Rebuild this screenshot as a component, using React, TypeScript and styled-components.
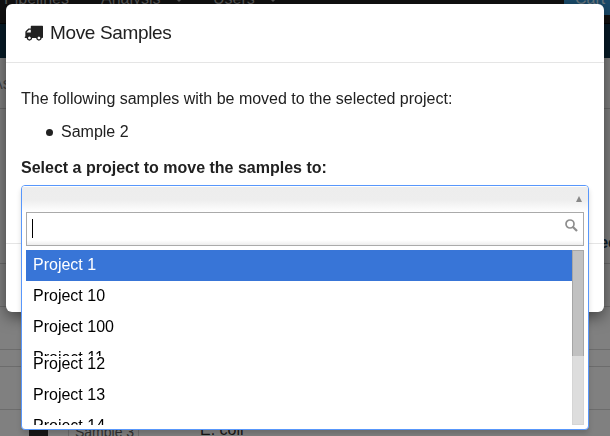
import React from "react";
import styled, { createGlobalStyle } from "styled-components";

const GlobalStyle = createGlobalStyle`
  html, body { margin: 0; padding: 0; overflow: hidden; }
  * { box-sizing: border-box; }
  body { font-family: "Liberation Sans", Arial, sans-serif; font-size: 16px; color: #212121; background: #808080; }
`;

const Page = styled.div`
  height: 436px;
  overflow: hidden;
  display: flex;
  flex-direction: column;
  background: #808080;
`;

const NavBar = styled.nav`
  height: 24px;
  flex: none;
  display: flex;
  align-items: flex-start;
  background: #111111;
  border-bottom: 1px solid #040404;
  color: #565656;
  line-height: 18px;
  padding-left: 4px;
`;

const NavLink = styled.span<{ $width: number }>`
  width: ${(p) => p.$width}px;
  flex: none;
  margin-top: -10px;
  display: flex;
  align-items: center;
  justify-content: space-between;
`;

const Caret = styled.i`
  border: 4px solid transparent;
  border-top-color: #565656;
  border-bottom: 0;
  margin-top: 2px;
`;

const CartButton = styled.span`
  margin-left: auto;
  width: 46px;
  height: 15px;
  padding-left: 11px;
  background: #1a4b6b;
  color: #68777f;
`;

const BlueStrip = styled.div`
  flex: none;
  height: 34px;
  background: #061b27;
`;

const PageHeading = styled.div`
  flex: none;
  height: 51px;
  border-bottom: 1px solid #6b6b6b;
  line-height: 52px;
  color: #454545;
  text-indent: -8px;
`;

const ColumnHeading = styled.div`
  flex: none;
  height: 155px;
  border-bottom: 1px solid #6b6b6b;
  display: flex;
  justify-content: flex-end;
  align-items: flex-end;
  padding-bottom: 11px;
  margin-right: -7px;
  font-weight: bold;
  color: #10212c;
`;

const TableRow = styled.div<{ $height: number }>`
  flex: none;
  height: ${(p) => p.$height}px;
  border-bottom: 1px solid #6c6c6c;
`;

const SampleRow = styled.div`
  flex: none;
  height: 30px;
  display: flex;
  align-items: flex-start;
  padding: 11px 0 0 29px;
  color: #161616;
`;

const RowCheck = styled.span`
  width: 19px;
  height: 16px;
  background: #171717;
  margin-right: 20px;
`;

const SampleTag = styled.span`
  width: 71px;
  height: 24px;
  border: 1px solid #6b6b6b;
  font-size: 14px;
  line-height: 20px;
  padding-left: 6px;
  color: #303030;
  margin-right: 61px;
`;

const Backdrop = styled.div`
  position: fixed;
  inset: 0;
  padding: 4px 6px;
`;

const Modal = styled.section`
  height: 308px;
  border-radius: 6px;
  background: #fff;
  box-shadow: 0 5px 15px rgba(0, 0, 0, 0.5);
  display: flex;
  flex-direction: column;
`;

const ModalHeader = styled.header`
  height: 59px;
  flex: none;
  display: flex;
  align-items: center;
  padding: 0 0 1px 18px;
  gap: 7px;
  border-bottom: 1px solid #e5e5e5;
`;

const Title = styled.h1`
  margin: 0;
  font-size: 19px;
  font-weight: normal;
  letter-spacing: -0.35px;
`;

const ModalBody = styled.div`
  height: 180px;
  flex: none;
  padding: 25px 15px 0;
  line-height: 22px;
`;

const Intro = styled.p`
  margin: 0 0 11px;
`;

const SampleList = styled.ul`
  margin: 0 0 14px;
  padding-left: 25px;
  list-style: none;
`;

const SampleItem = styled.li`
  display: flex;
  align-items: center;
  gap: 8px;

  &::before {
    content: "";
    width: 7px;
    height: 7px;
    border-radius: 50%;
    background: #212121;
  }
`;

const FieldLabel = styled.label`
  display: block;
  font-weight: bold;
`;

const ModalFooter = styled.footer`
  flex: 1;
  border-top: 1px solid #e5e5e5;
`;

const Dropdown = styled.div`
  position: absolute;
  left: 21px;
  top: 185px;
  width: 568px;
  height: 245px;
  border: 1px solid #5897fb;
  border-radius: 4px;
  background: #fff;
  box-shadow: 0 4px 5px rgba(0, 0, 0, 0.15);
  padding: 0 4px;
  overflow: hidden;
  color: #000;
`;

const Choice = styled.div`
  height: 26px;
  margin: 0 -4px;
  padding: 10px 6px 0 0;
  display: flex;
  justify-content: flex-end;
  align-items: flex-start;
  background: linear-gradient(#fff 0, #fff 1px, #ededed 1px, #eee 55%, #fff 100%);
`;

const UpArrow = styled.i`
  border: 3.5px solid transparent;
  border-bottom: 6px solid #888;
  border-top: 0;
`;

const SearchBox = styled.div`
  height: 34px;
  border: 1px solid #aaa;
  background: linear-gradient(#fff 85%, #eee 99%);
  display: flex;
  justify-content: space-between;
  padding: 6px 5px 0 5px;
`;

const TextCursor = styled.span`
  width: 1px;
  height: 19px;
  background: #000;
`;

const Results = styled.div`
  height: 175px;
  margin-top: 4px;
  display: flex;
`;

const Options = styled.ul`
  flex: 1;
  margin: 0;
  padding: 0;
  list-style: none;
  overflow: hidden;
`;

type Slice = "full" | "top" | "bottom";

const sliceHeight: Record<Slice, number> = { full: 31, top: 13, bottom: 24 };

const Option = styled.li<{ $active?: boolean; $slice: Slice }>`
  height: ${(p) => sliceHeight[p.$slice]}px;
  overflow: hidden;
  padding: ${(p) => (p.$slice === "bottom" ? 0 : 5)}px 7px 0;
  line-height: ${(p) => (p.$slice === "bottom" ? 16 : 20)}px;
  background: ${(p) => (p.$active ? "#3875d7" : "#fff")};
  color: ${(p) => (p.$active ? "#fff" : "#000")};
`;

const ScrollTrack = styled.div`
  width: 12px;
  background: #ddd;
  border: solid #d5d5d5;
  border-width: 0 1px 1px;
`;

const ScrollThumb = styled.div`
  height: 106px;
  margin: 0 -1px;
  background: #c1c1c1;
  border: 1px solid #a6a6a6;
  border-bottom: 0;
`;

const TruckIcon = () => (
  <svg width="19" height="19" viewBox="0 0 1792 1792" fill="#212121">
    <path d="M640 1408q0-52-38-90t-90-38-90 38-38 90 38 90 90 38 90-38 38-90zm-384-512h384v-256h-158q-13 0-22 9l-195 195q-9 9-9 22v30zm1280 512q0-52-38-90t-90-38-90 38-38 90 38 90 90 38 90-38 38-90zm256-1088v1024q0 15-4 26.5t-13.5 18.5-16.5 11.5-23.5 6-22.5 2-25.5 0-22.5-.5q0 106-75 181t-181 75-181-75-75-181h-384q0 106-75 181t-181 75-181-75-75-181h-64q-3 0-22.5.5t-25.5 0-22.5-2-23.5-6-16.5-11.5-13.5-18.5-4-26.5q0-26 19-45t45-19v-320q0-8-.5-35t0-38 2.5-34.5 6.5-37 14-30.5 22.5-30l198-198q19-19 50.5-32t58.5-13h160v-192q0-26 19-45t45-19h1024q26 0 45 19t19 45z" />
  </svg>
);

const SearchIcon = () => (
  <svg width="14" height="14" viewBox="0 0 14 14" fill="none" stroke="#8e8e8e">
    <circle cx="6" cy="5" r="4" strokeWidth="1.7" />
    <path d="M8.7 7.8L13 12" strokeWidth="2.3" />
  </svg>
);

const projects: { name: string; active?: boolean; slice?: Slice }[] = [
  { name: "Project 1", active: true },
  { name: "Project 10" },
  { name: "Project 100" },
  { name: "Project 11", slice: "top" },
  { name: "Project 12", slice: "bottom" },
  { name: "Project 13" },
  { name: "Project 14" },
];

export default function App() {
  return (
    <>
      <GlobalStyle />
      <Page>
        <NavBar>
          <NavLink $width={97}>Pipelines</NavLink>
          <NavLink $width={82}>Analysis<Caret /></NavLink>
          <NavLink $width={30} />
          <NavLink $width={64}>Users<Caret /></NavLink>
          <CartButton><NavLink $width={35}>Cart</NavLink></CartButton>
        </NavBar>
        <BlueStrip />
        <PageHeading>As</PageHeading>
        <ColumnHeading>ec</ColumnHeading>
        <TableRow $height={43} />
        <TableRow $height={43} />
        <TableRow $height={17} />
        <TableRow $height={43} />
        <SampleRow>
          <RowCheck />
          <SampleTag>Sample 3</SampleTag>
          <span>E. coli</span>
        </SampleRow>
      </Page>
      <Backdrop>
        <Modal>
          <ModalHeader>
            <TruckIcon />
            <Title>Move Samples</Title>
          </ModalHeader>
          <ModalBody>
            <Intro>The following samples with be moved to the selected project:</Intro>
            <SampleList>
              <SampleItem>Sample 2</SampleItem>
            </SampleList>
            <FieldLabel>Select a project to move the samples to:</FieldLabel>
          </ModalBody>
          <ModalFooter />
        </Modal>
        <Dropdown>
          <Choice><UpArrow /></Choice>
          <SearchBox>
            <TextCursor />
            <SearchIcon />
          </SearchBox>
          <Results>
            <Options>
              {projects.map((p) => (
                <Option key={p.name} $active={p.active} $slice={p.slice ?? "full"}>{p.name}</Option>
              ))}
            </Options>
            <ScrollTrack><ScrollThumb /></ScrollTrack>
          </Results>
        </Dropdown>
      </Backdrop>
    </>
  );
}
